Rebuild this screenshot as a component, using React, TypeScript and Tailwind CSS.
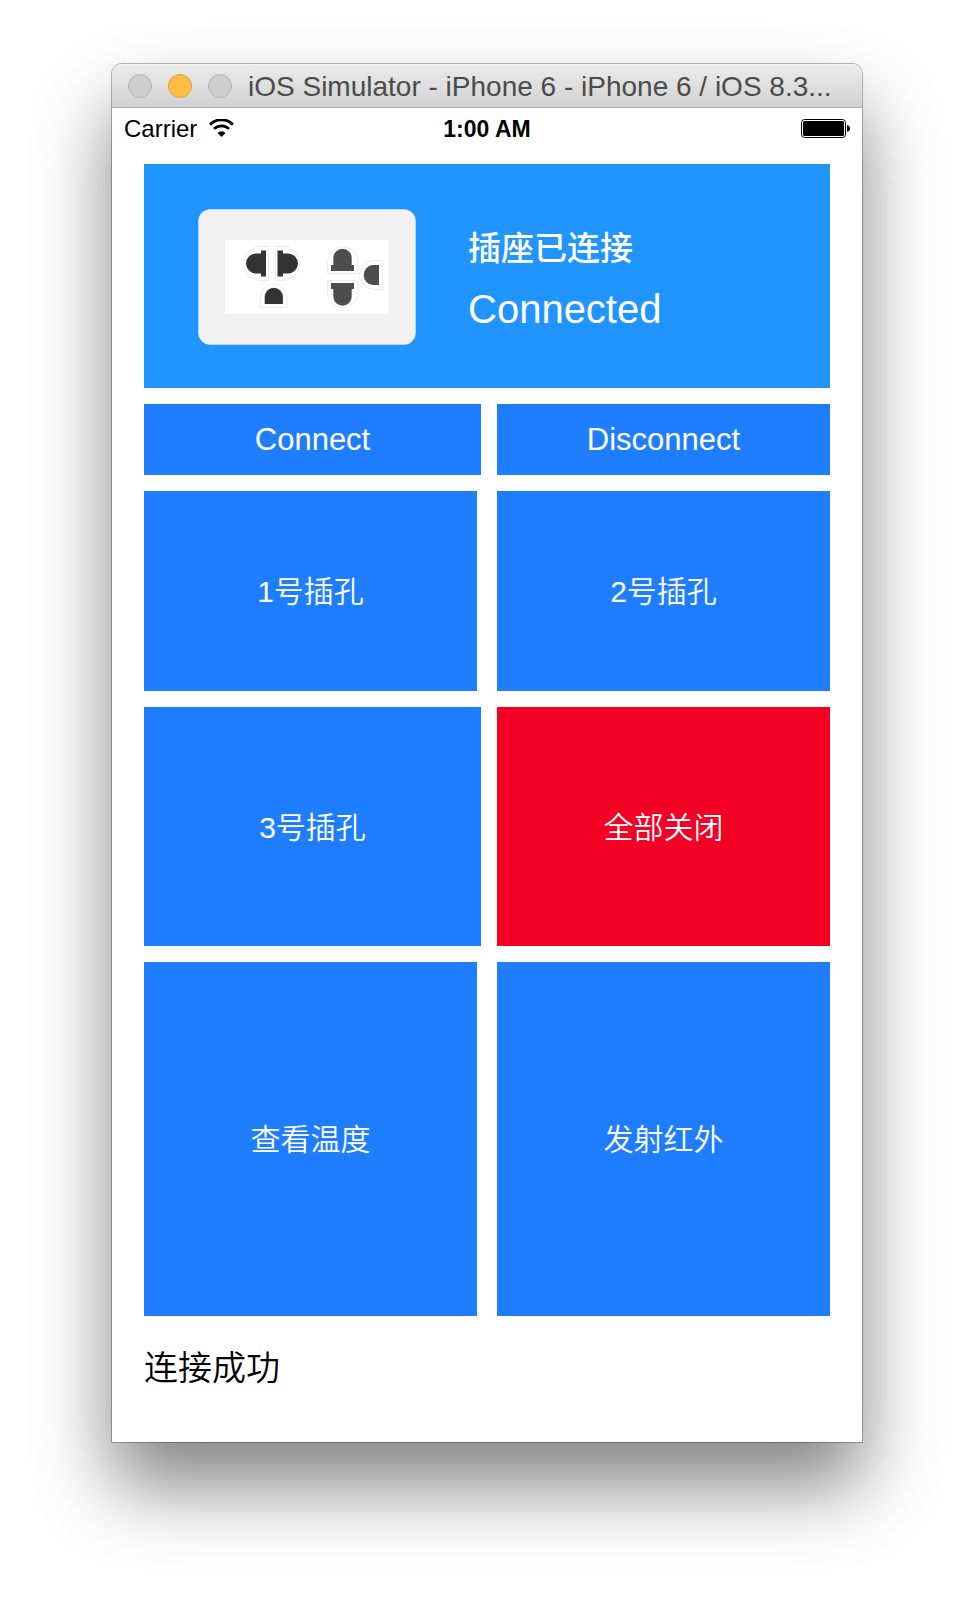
const tiles = [
  { layout: "h-[71px] grid-cols-[337fr_333fr] gap-4 text-[31px]", items: [["Connect", "bg-[#1f7eff]"], ["Disconnect", "bg-[#1f7eff]"]] },
  { layout: "h-[200px] grid-cols-2 gap-5 text-3xl", items: [["1号插孔", "bg-[#1f7eff]"], ["2号插孔", "bg-[#1f7eff]"]] },
  { layout: "h-[239px] grid-cols-[337fr_333fr] gap-4 text-3xl", items: [["3号插孔", "bg-[#1f7eff]"], ["全部关闭", "bg-[#f50025]"]] },
  { layout: "h-[354px] grid-cols-2 gap-5 text-3xl", items: [["查看温度", "bg-[#1f7eff]"], ["发射红外", "bg-[#1f7eff]"]] },
];

function WifiIcon() {
  return (
    <svg className="h-[18px] w-[25px]" viewBox="0 0 25 18" aria-hidden="true">
      <g fill="none" stroke="#000">
        <path d="M1 5.6A16.2 16.2 0 0 1 24 5.6" strokeWidth="3" />
        <path d="M5 9.9A10.6 10.6 0 0 1 20 9.9" strokeWidth="2.7" />
      </g>
      <path d="M12.5 18L8.5 13.9A5.7 5.7 0 0 1 16.5 13.9Z" />
    </svg>
  );
}

function BatteryIcon() {
  return (
    <svg className="h-[19px] w-[49px]" viewBox="0 0 49 19" role="img" aria-label="Battery full">
      <rect x="0.5" y="0.5" width="44" height="18" rx="3" fill="#fff" stroke="#000" />
      <rect x="2" y="2" width="41" height="15" rx="1.5" />
      <path d="M46 6.2C48 6.4 49 7.6 49 9.5S48 12.6 46 12.8Z" />
    </svg>
  );
}

function SocketPicture() {
  return (
    <svg className="h-[136px] w-[218px] shrink-0" viewBox="0 0 218 136" aria-hidden="true">
      <rect x="0.3" y="0.3" width="217.4" height="135.4" rx="12" fill="#f1f1f1" />
      <rect x="27" y="31" width="163.5" height="74" fill="#fff" />
      <g fill="#fff" stroke="#ececec">
        <path d="M70.5 37.5H63A17 17 0 0 0 63 71.5H70.5Z" />
        <path d="M77.5 37.5H84.5A17 17 0 0 1 84.5 71.5H77.5Z" />
        <path d="M62.5 98.5V88A13.2 13.2 0 0 1 88.9 88V98.5Z" />
        <path d="M129.5 64.5V53A15.2 15.2 0 0 1 159.9 53V64.5Z" />
        <path d="M129.5 71.5V83.5A15.2 15.2 0 0 0 159.9 83.5V71.5Z" />
        <path d="M184.5 51.5H176A14.5 14.5 0 0 0 176 80.5H184.5Z" />
      </g>
      <g fill="#333">
        <path d="M68 41.5H63V44.5H58A10 10 0 0 0 58 64.5H63V67.5H68Z" />
        <path d="M79.5 41.5H85V44.5H90A10 10 0 0 1 90 64.5H85V67.5H79.5Z" />
        <path d="M66.7 95V88A9.1 9.3 0 0 1 84.9 88V95Z" />
      </g>
      <g fill="#4d4d4d">
        <path d="M133 62V56H135.3V49A9.2 9.2 0 0 1 153.7 49V56H156V62Z" />
        <path d="M133 74V80H135.3V87.5A9.2 9.2 0 0 0 153.7 87.5V80H156V74Z" />
        <path d="M181 56H175A9.3 10 0 0 0 175 76H181Z" />
      </g>
    </svg>
  );
}

export default function App() {
  return (
    <div className="min-h-screen bg-white px-28 pt-16 pb-40 font-['Liberation_Sans','Noto_Sans_CJK_SC',sans-serif]">
      <main className="rounded-t-[10px] bg-white shadow-[0_0_0_1px_rgba(0,0,0,0.27),0_44px_78px_rgba(0,0,0,0.49)]">
        <header className="flex h-11 items-center gap-4 rounded-t-[10px] border-b border-[#aaa] bg-linear-to-b from-[#ececec] to-[#d2d2d2] px-4 shadow-[inset_0_1px_0_#f6f6f6]">
          <button type="button" aria-label="Close" className="size-6 shrink-0 rounded-full border border-[#b4b4b4] bg-[#cfcfcf]" />
          <button type="button" aria-label="Minimize" className="size-6 shrink-0 rounded-full border border-[#e09e3e] bg-[#ffbe41]" />
          <button type="button" aria-label="Zoom" className="size-6 shrink-0 rounded-full border border-[#b4b4b4] bg-[#cfcfcf]" />
          <h1 className="pt-0.5 text-[28px] whitespace-nowrap text-[#4b4b4b]">iOS Simulator - iPhone 6 - iPhone 6 / iOS 8.3...</h1>
        </header>
        <div className="grid h-10 grid-cols-[1fr_auto_1fr] items-center px-3 text-2xl text-black">
          <div className="flex items-center gap-3">
            <span className="pt-0.5">Carrier</span>
            <WifiIcon />
          </div>
          <span className="pt-0.5 text-[23px] font-bold">1:00 AM</span>
          <div className="flex justify-end">
            <BatteryIcon />
          </div>
        </div>
        <div className="flex flex-col gap-4 px-8 pt-4">
          <section className="flex h-56 items-center gap-[52px] bg-[#2094ff] px-[54px] pt-0.5 text-white">
            <SocketPicture />
            <div className="pt-1">
              <p className="text-[33px] leading-[60px] font-medium">插座已连接</p>
              <p className="text-[40px] leading-[60px]">Connected</p>
            </div>
          </section>
          {tiles.map((row) => (
            <div key={row.layout} className={`grid ${row.layout}`}>
              {row.items.map(([label, color]) => (
                <button key={label} type="button" className={`pt-0.5 font-[350] text-white ${color}`}>
                  {label}
                </button>
              ))}
            </div>
          ))}
        </div>
        <p className="px-8 pt-[26px] pb-12 text-[34px] leading-[52px] font-[350] text-black">连接成功</p>
      </main>
    </div>
  );
}
